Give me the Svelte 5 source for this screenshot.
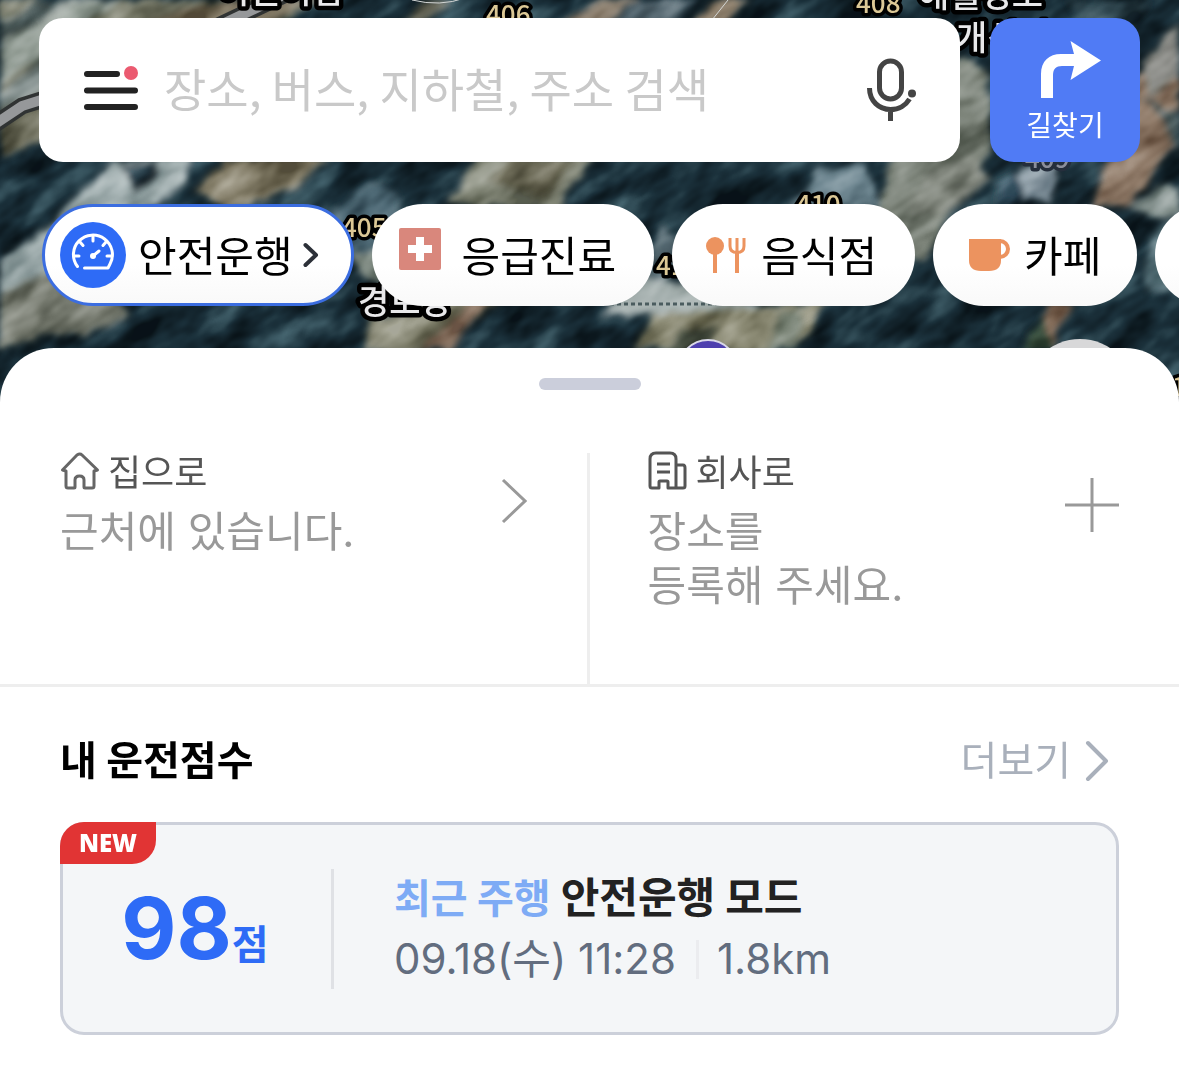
<script>
  let query = $state('');
  const mapNumbers = [
    { x: 486, y: 24, t: '406' },
    { x: 856, y: 13, t: '408' },
    { x: 796, y: 214, t: '410' },
    { x: 342, y: 237, t: '405' },
    { x: 656, y: 275, t: '411' },
    { x: 1172, y: 396, t: '12' }
  ];
  const mapPlaces = [
    { x: 218, y: 3, t: '어린이집' },
    { x: 918, y: 7, t: '해월경로' },
    { x: 956, y: 50, t: '개신지' },
    { x: 358, y: 314, t: '경로당' }
  ];
</script>

<div class="app">
  <svg class="map" viewBox="0 0 1179 420" preserveAspectRatio="xMidYMin slice" aria-hidden="true">
    <defs>
      <filter id="soft" x="-5%" y="-5%" width="110%" height="110%">
        <feTurbulence type="fractalNoise" baseFrequency="0.05" numOctaves="2" seed="4" result="n" />
        <feDisplacementMap in="SourceGraphic" in2="n" scale="14" xChannelSelector="R" yChannelSelector="G" />
        <feGaussianBlur stdDeviation="3" />
      </filter>
      <filter id="grain" x="0" y="0" width="100%" height="100%" color-interpolation-filters="sRGB">
        <feTurbulence type="fractalNoise" baseFrequency="0.018 0.035" numOctaves="3" seed="11" />
        <feColorMatrix type="matrix" values="1.6 0 0 0 -0.36  1.6 0 0 0 -0.36  1.6 0 0 0 -0.38  0 0 0 0 1" />
      </filter>
    </defs>
    <rect width="1179" height="420" fill="#1b313d" />
    <g filter="url(#soft)">
      <path fill="#77796b" d="M0 0H330L220 50 40 110 0 135Z" />
      <path fill="#98a29c" d="M0 20L60 0H120L0 85Z" />
      <path fill="#857c6a" d="M150 20L230 0H330L240 30Z" />
      <path fill="#4b5a5c" d="M40 0H75L0 45V25Z" />
      <path fill="#7f8b8b" d="M0 95L45 55V90L0 110Z" />
      <path fill="#6a6a5a" d="M0 125L45 105V140L0 155Z" />
      <path fill="#a6b3b5" d="M0 262L60 215 95 180 115 162 192 155 185 185 120 225 50 275 0 292Z" />
      <path fill="#2a414d" d="M122 165L158 160 150 180 134 192Z" />
      <path fill="#7b8077" d="M0 292L50 270 110 290 130 315 90 335 40 335 0 350Z" />
      <path fill="#857f6c" d="M195 190L225 158H330L290 190 225 210Z" />
      <path fill="#4f6a78" d="M330 215L372 180 400 200V265L360 270Z" />
      <path fill="#8a958f" d="M352 258L395 240V290L365 280Z" />
      <path fill="#7b7b6a" d="M362 350L368 318 450 300H500L440 350Z" />
      <path fill="#9c8778" d="M425 350L470 300H492L450 350Z" />
      <path fill="#8b8f82" d="M448 204L478 155H595L560 210Z" />
      <path fill="#676654" d="M488 180L510 158H580L545 200Z" />
      <path fill="#86796a" d="M560 25L600 0H640L600 25Z" />
      <path fill="#8f8170" d="M690 25L715 0H750L720 25Z" />
      <path fill="#526570" d="M610 25L640 0H700L670 25Z" />
      <path fill="#6f7064" d="M400 25L425 0H450L420 25Z" />
      <path fill="#566a74" d="M640 290L660 225 680 240 670 280Z" />
      <path fill="#a2adad" d="M600 315L640 278 700 285 760 305 730 315Z" />
      <path fill="#8c8b77" d="M632 350L650 316 760 306 830 300 795 350Z" />
      <path fill="#4d544a" d="M665 350L680 328 720 325 712 350Z" />
      <path fill="#6d8591" d="M785 210L820 170 865 162 880 205Z" />
      <path fill="#7f867e" d="M875 215L895 155 960 55 990 75V150L925 260H905Z" />
      <path fill="#8d928b" d="M925 170L975 155 990 180 950 215H910Z" />
      <path fill="#9aa8b2" d="M1010 200L1020 170 1060 160 1050 200Z" />
      <path fill="#2a4557" d="M995 185L1015 170 1025 200 1000 204Z" />
      <path fill="#8f7a6b" d="M1090 205L1110 160 1140 70 1179 45V140L1130 205Z" />
      <path fill="#344d59" d="M1065 0H1150L1130 30 1080 20Z" />
      <path fill="#7e7f7b" d="M1140 60L1179 25V75L1150 100Z" />
      <path fill="#4b5c5e" d="M1140 100L1165 120 1179 160V110Z" />
      <path fill="#8f9b9a" d="M1130 205L1160 185 1179 190V215L1150 220Z" />
      <path fill="#87705f" d="M1030 350L1052 304H1072L1050 350Z" />
      <path fill="#3f5647" d="M1018 350L1045 315 1050 350Z" />
      <path fill="#617c85" d="M1145 290L1150 235 1179 215V290Z" />
      <path fill="#727b70" d="M770 350L780 310 805 306 795 350Z" />
    </g>
    <g class="grain"><rect x="-300" y="-100" width="1600" height="1200" transform="rotate(-35 0 0)" filter="url(#grain)" /></g>
    <path fill="none" stroke="#303333" stroke-width="17" d="M-5 124L22 106 60 94M210 30L290 -8" />
    <path fill="none" stroke="#96989a" stroke-width="10" d="M-5 124L22 106 60 94M210 30L290 -8" />
    <path fill="none" stroke="#d3d6d5" stroke-width="1" d="M412 0Q440 7 465 -2M712 20L728 0" />
    <path fill="none" stroke="#4b5c5f" stroke-width="3" stroke-dasharray="4 3" d="M610 304H740" />
    <g class="num">
      {#each mapNumbers as m}<text x={m.x} y={m.y}>{m.t}</text>{/each}
      <text class="far" x="1025" y="168">409</text>
    </g>
    <g class="place">
      {#each mapPlaces as m}<text x={m.x} y={m.y}>{m.t}</text>{/each}
    </g>
    <circle cx="708" cy="369" r="29" fill="#4e40ae" stroke="#d9d8e8" stroke-width="2" />
    <circle cx="1080" cy="394" r="55" fill="#d8d8d9" />
  </svg>

  <header class="top">
    <form class="search" role="search">
      <button class="icon" type="button" aria-label="메뉴">
        <svg width="56" height="50" viewBox="0 0 56 50">
          <g stroke="#222" stroke-width="6" stroke-linecap="round">
            <path d="M4 9H34M4 25.500H52M4 42H52" />
          </g>
          <circle cx="48" cy="8" r="7" fill="#eb5a70" />
        </svg>
      </button>
      <input type="text" aria-label="검색" placeholder="장소, 버스, 지하철, 주소 검색" bind:value={query} />
      <button class="icon" type="button" aria-label="음성 검색">
        <svg width="50" height="64" viewBox="0 0 50 64" fill="none" stroke="#444">
          <rect x="12.500" y="3" width="22" height="38" rx="11" stroke-width="5" />
          <path stroke-width="5" d="M2.500 30C2.500 43 12 51.500 23.500 51.500 32 51.500 39 47 42.500 41M23.500 51V63" />
          <circle cx="45" cy="35.500" r="4" fill="#444" stroke="none" />
        </svg>
      </button>
    </form>
    <button class="route" type="button">
      <svg width="62" height="60" viewBox="0 0 62 60" fill="#fff">
        <path d="M1 58V34C1 21 9 14 21 14H34L30.500 1 61 20.500 30.500 40 34 26H22C16 26 13 29 13 35V58Z" />
      </svg>
      <span>길찾기</span>
    </button>
  </header>

  <nav class="chips" aria-label="카테고리">
    <button class="chip drive" type="button">
      <svg width="66" height="66" viewBox="0 0 66 66">
        <circle cx="33" cy="33" r="33" fill="#2e6bf6" />
        <g fill="none" stroke="#fff" stroke-width="3" stroke-linecap="round" stroke-linejoin="round">
          <path d="M17.500 44.500A19.500 19.500 0 1 1 50 42L48 46H24.500" />
          <path d="M33 14.500V19M20 20L23 23.500M46 20L43 23.500M14 34H19M47 34H52" />
          <path d="M33 34L39 29" />
        </g>
        <circle cx="33" cy="34" r="3" fill="#fff" />
      </svg>
      <span>안전운행</span>
      <svg class="go" width="16" height="26" viewBox="0 0 16 26" fill="none" stroke="#2c3038" stroke-width="4" stroke-linecap="round" stroke-linejoin="round"><path d="M2.500 3L13 13 2.500 23" /></svg>
    </button>
    <button class="chip medical" type="button">
      <svg width="42" height="54" viewBox="0 0 42 54"><rect width="42" height="42" rx="2" fill="#d9877c" /><path fill="#fff" d="M17 9H25V17H33V25H25V33H17V25H9V17H17Z" /></svg>
      <span>응급진료</span>
    </button>
    <button class="chip food" type="button">
      <svg width="40" height="36" viewBox="0 0 40 36"><circle cx="9" cy="9" r="9" fill="#ec935f" /><path fill="#ec935f" d="M7 16H11V36H7ZM29 14H33V36H29Z" /><path fill="none" stroke="#ec935f" stroke-width="3" d="M24 1V9Q24 15.500 31 15.500T38 9V1M31 1V15" /></svg>
      <span>음식점</span>
    </button>
    <button class="chip cafe" type="button">
      <svg width="42" height="34" viewBox="0 0 42 34"><path fill="#ec935f" d="M0 1H32V22Q32 33 20 33H12Q0 33 0 22Z" /><path fill="none" stroke="#ec935f" stroke-width="4" d="M31 3A8 8 0 1 1 31 19" /></svg>
      <span>카페</span>
    </button>
    <button class="chip next" type="button" aria-label="더 많은 카테고리"></button>
  </nav>

  <main class="sheet">
    <div class="handle"></div>
    <section class="quick">
      <a class="place-link" href="#home">
        <span class="info">
          <span class="label">
            <svg width="40" height="40" viewBox="0 0 40 40" fill="none" stroke="#666" stroke-width="3" stroke-linecap="round" stroke-linejoin="round">
              <path d="M6 20V35Q6 37 8 37H14Q15 37 15 36V29Q15 25 19.500 25T24 29V36Q24 37 25 37H32Q34 37 34 35V20M6 20L2.500 19 17 4Q20 2 22 4L37.500 19 34 20" />
            </svg>
            집으로
          </span>
          <span class="desc">근처에 있습니다.</span>
        </span>
        <svg class="arrow" width="26" height="46" viewBox="0 0 26 46" fill="none" stroke="#999" stroke-width="3"><path d="M2 2L24 23 2 44" /></svg>
      </a>
      <a class="place-link" href="#work">
        <span class="info">
          <span class="label">
            <svg width="40" height="40" viewBox="0 0 40 40" fill="none" stroke="#555" stroke-width="3" stroke-linejoin="round">
              <path d="M28 37V8Q28 2 22 2H8Q2 2 2 8V35Q2 37 4 37H11V31Q11 30 12 30H19Q20 30 20 31V37H35Q37 37 37 35V17Q37 14 35 14H28M9 13H22M9 21H22" />
            </svg>
            회사로
          </span>
          <span class="desc">장소를<br />등록해 주세요.</span>
        </span>
        <svg class="plus" width="54" height="54" viewBox="0 0 54 54" stroke="#999" stroke-width="3"><path d="M27 0V54M0 27H54" /></svg>
      </a>
    </section>

    <section class="score">
      <div class="heading">
        <h2>내 운전점수</h2>
        <a href="#more">더보기
          <svg width="24" height="42" viewBox="0 0 24 42" fill="none" stroke="#a9b0bb" stroke-width="4" stroke-linecap="round" stroke-linejoin="round"><path d="M3 3L21 21 3 39" /></svg>
        </a>
      </div>
      <article class="card">
        <span class="badge">NEW</span>
        <p class="points"><strong>98</strong><span>점</span></p>
        <div class="trip">
          <p class="mode"><span>최근 주행</span> 안전운행 모드</p>
          <p class="meta"><time datetime="09-18T11:28">09.18(수) 11:28</time><span>1.8km</span></p>
        </div>
      </article>
    </section>
  </main>
</div>

<style>
  :global(body) { background: #fff; }
  .app {
    position: relative;
    overflow: hidden;
    min-height: 100vh;
    font-family: Inter, 'Noto Sans CJK KR', sans-serif;
    color: #000;
  }
  .app *, .app { box-sizing: border-box; }
  button { border: 0; padding: 0; background: none; font: inherit; color: inherit; cursor: pointer; }
  a { color: inherit; text-decoration: none; }
  p, h2 { margin: 0; }
  svg { display: block; flex: none; }
  .map { position: absolute; top: 0; left: 0; width: 100%; height: 420px; }
  .grain { mix-blend-mode: soft-light; opacity: 0.8; }
  .num, .place { paint-order: stroke; stroke: #000; stroke-linejoin: round; font-family: 'Noto Sans CJK KR', sans-serif; }
  .num { font-size: 26px; font-weight: 500; fill: #dcc896; stroke-width: 7px; }
  .num .far { fill: #8b8e9b; stroke: #252e3c; }
  .place { font-size: 34px; font-weight: 500; fill: #e8e8ea; stroke-width: 9px; }

  .top { position: relative; display: flex; gap: 30px; padding: 18px 39px 0; }
  .search {
    flex: 1; min-width: 0; height: 144px; display: flex; align-items: center;
    padding: 0 43px 0 44px; border-radius: 24px; background: #fff;
  }
  .search input {
    flex: 1; min-width: 0; border: 0; outline: 0; background: none; padding: 0 0 6px; margin: 0 25px;
    height: 72px; color: #222; font-family: 'Noto Sans CJK KR', sans-serif; font-size: 46px;
  }
  .search input::placeholder { color: #c9c9c9; opacity: 1; }
  .route {
    width: 150px; height: 144px; border-radius: 24px; background: #507bf5; color: #fff;
    display: flex; flex-direction: column; align-items: center; padding-top: 22px; gap: 8px;
    font-size: 28px; line-height: 36px;
  }
  .route svg { margin-left: 12px; }

  .chips { position: relative; display: flex; gap: 18px; padding: 42px 0 0 42px; }
  .chip {
    flex: none; height: 102px; border-radius: 51px; display: flex; align-items: center;
    background: linear-gradient(#fff 60%, #f9f9f9); font-size: 42px; line-height: 60px;
  }
  .chip span { padding-top: 4px; }
  .drive { border: 3px solid #3b6de0; padding: 0 32px 0 15px; gap: 12px; }
  .drive .go { margin-left: -2px; }
  .medical { padding: 0 38px 0 27px; gap: 21px; }
  .food { padding: 0 38px 0 34px; gap: 15px; }
  .cafe { padding: 0 36px; gap: 13px; }
  .next { width: 204px; }

  .sheet { position: relative; margin-top: 42px; padding-top: 30px; background: #fff; border-radius: 54px 54px 0 0; }
  .handle { width: 102px; height: 12px; margin: 0 auto; border-radius: 6px; background: #cbcedb; }
  .quick { display: grid; grid-template-columns: 1fr 1fr; margin-top: 63px; border-bottom: 3px solid #eee; }
  .place-link { display: flex; justify-content: space-between; align-items: flex-start; min-height: 231px; padding: 0 60px; }
  .place-link:first-child { border-right: 3px solid #eee; }
  .place-link:last-child { padding-left: 58px; }
  .label { display: flex; align-items: center; gap: 8px; height: 36px; font-size: 36px; line-height: 36px; padding-top: 4px; color: #555; }
  .label svg { margin-bottom: 4px; }
  .desc { display: block; margin-top: 16px; font-size: 42px; line-height: 54px; color: #999; }
  .arrow, .plus { margin-top: 25px; }

  .score { padding: 42px 60px 49px; }
  .heading { display: flex; justify-content: space-between; align-items: center; height: 63px; }
  h2 { font-size: 40px; line-height: 60px; font-weight: 700; }
  .heading a { display: flex; align-items: center; gap: 14px; padding-right: 10px; font-size: 40px; line-height: 60px; color: #a9b0bb; }
  .card {
    position: relative; display: flex; align-items: center; margin-top: 30px; height: 213px;
    border: 3px solid #ccd0da; border-radius: 24px; background: #f4f6f8;
  }
  .badge {
    position: absolute; top: -3px; left: -3px; width: 96px; height: 42px; border-radius: 24px 0 24px 0;
    background: #e13434; color: #fff; font-family: 'Noto Sans', sans-serif; font-size: 24px; line-height: 42px; font-weight: 900; text-align: center;
  }
  .points {
    flex: none; width: 271px; height: 120px; display: flex; align-items: baseline; justify-content: center;
    padding-right: 4px; border-right: 3px solid #dfe1e5; color: #2e6bf6; font-size: 40px; line-height: 120px; font-weight: 700;
  }
  .points strong { font-size: 85px; font-weight: 700; }
  .trip { padding-left: 60px; }
  .mode { font-size: 42px; line-height: 60px; font-weight: 700; color: #222; }
  .mode span { font-size: 40px; color: #7eabf5; }
  .meta { display: flex; align-items: center; font-size: 42px; line-height: 60px; color: #626d7f; }
  .meta span { display: flex; align-items: center; margin-left: 20px; }
  .meta span::before { content: ''; width: 3px; height: 39px; margin-right: 18px; background: #ebecef; }
</style>
